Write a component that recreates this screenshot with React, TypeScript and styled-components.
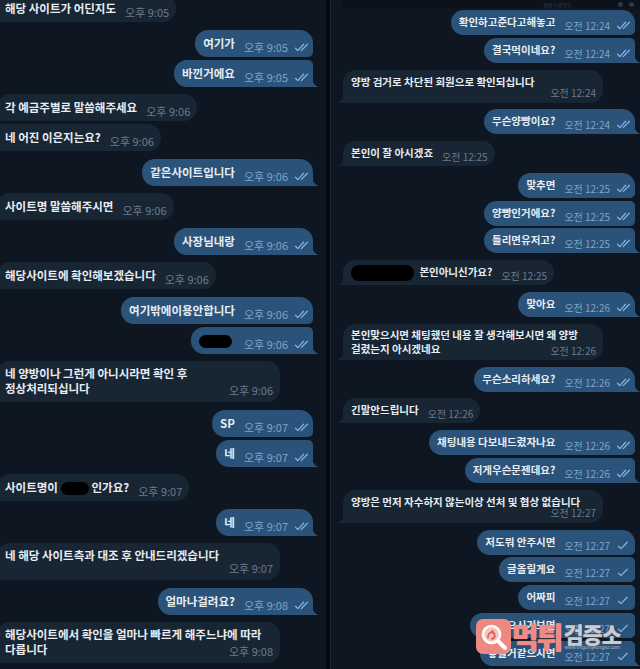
import React from 'react';
import styled, { createGlobalStyle, css } from 'styled-components';

const colors = {
  bg: '#0e1621',
  divider: '#05080c',
  inBubble: '#182533',
  outBubble: '#2b5278',
  text: '#e7edf2',
  inTime: '#6b7b8b',
  outTime: '#7fa5c8',
  check: '#79b5ea',
};

type Side = 'in' | 'out';
type Size = 'lg' | 'sm';
type MetaMode = 'inline' | 'float' | 'block';

type Msg = {
  side: Side;
  text: React.ReactNode;
  time: string;
  check?: 1 | 2;
  meta?: MetaMode;
  wide?: boolean;
};

const sizes = {
  lg: {
    font: 11.5, line: 15, time: 11, wide: 283, sameGap: 3, groupGap: 7.5, listTop: -5,
    inlinePad: [6, 6], floatPad: '5px 7px 6px 8px', floatTop: 4, blockPad: '5px 7px 6px 8px', blockTop: 0,
  },
  sm: {
    font: 10.5, line: 14, time: 10, wide: 260, sameGap: 2.75, groupGap: 6.8, listTop: 2,
    inlinePad: [5, 6], floatPad: '4px 7px 4px 8px', floatTop: 3, blockPad: '5px 7px 5px 8px', blockTop: -2,
  },
};

const GlobalStyle = createGlobalStyle`
  html, body {
    margin: 0;
    padding: 0;
    background: ${colors.bg};
  }
  body {
    font-family: "Noto Sans CJK KR", "Noto Sans", sans-serif;
  }
`;

const Screen = styled.div`
  position: relative;
  width: 640px;
  height: 669px;
  overflow: hidden;
  display: grid;
  grid-template-columns: 326px 4px 1fr;
  background: ${colors.bg};
`;

const Divider = styled.div`
  background: ${colors.divider};
`;

const Panel = styled.section<{ $size: Size }>`
  display: flex;
  flex-direction: column;
  min-width: 0;
  overflow: hidden;
  background: ${colors.bg};
  ${p => p.$size === 'lg'
    ? css`padding: 0 13px 0 0;`
    : css`
      border-left: 1px solid #1a2330;
      padding: 0 5px 0 12px;
    `}
`;

const PanelHeader = styled.div`
  height: 8px;
  display: flex;
  align-items: center;
  justify-content: flex-end;
  gap: 6px;
  padding-right: 6px;
  margin-right: -5px;
  background: #0b121b;
  font-size: 5px;
  color: #3b4856;
  span { margin-right: 40px; }
  i {
    width: 5px;
    height: 5px;
    border-radius: 50%;
    background: #2c3845;
  }
`;

const List = styled.div<{ $size: Size }>`
  display: flex;
  flex-direction: column;
  margin-top: ${p => sizes[p.$size].listTop}px;
`;

const Row = styled.div<{ $side: Side; $gap: number; $size: Size }>`
  display: flex;
  justify-content: ${p => (p.$side === 'out' ? 'flex-end' : 'flex-start')};
  margin-top: ${p => p.$gap}px;
  ${p => p.$size === 'lg' && p.$side === 'in' && css`margin-left: -3px;`}
`;

const BIG = 13;
const SMALL = 5;

const Bubble = styled.div<{ $side: Side; $first: boolean; $last: boolean; $size: Size; $mode: MetaMode; $wide?: boolean }>`
  position: relative;
  box-sizing: border-box;
  white-space: nowrap;
  color: ${colors.text};
  font-size: ${p => sizes[p.$size].font}px;
  font-weight: 700;
  line-height: ${p => sizes[p.$size].line}px;
  background: ${p => (p.$side === 'out' ? colors.outBubble : colors.inBubble)};
  ${p => p.$mode === 'inline' && css`
    display: flex;
    align-items: flex-end;
    padding: ${sizes[p.$size].inlinePad[0]}px ${p.$side === 'out' ? 4 : 7}px ${sizes[p.$size].inlinePad[1]}px 8px;
  `}
  ${p => p.$mode === 'float' && css`padding: ${sizes[p.$size].floatPad};`}
  ${p => p.$mode === 'block' && css`padding: ${sizes[p.$size].blockPad};`}
  ${p => p.$wide && css`width: ${sizes[p.$size].wide}px;`}
  ${p => p.$side === 'out'
    ? css`border-radius: ${BIG}px ${p.$first ? BIG : SMALL}px ${p.$last ? 0 : SMALL}px ${BIG}px;`
    : css`border-radius: ${p.$first ? BIG : SMALL}px ${BIG}px ${BIG}px ${p.$last ? 0 : SMALL}px;`}

  ${p => p.$last && css`
    &::after {
      content: '';
      position: absolute;
      bottom: 0;
      width: 7px;
      height: 10px;
      ${p.$side === 'out'
        ? css`
          right: -6px;
          background: radial-gradient(ellipse 7px 10px at 100% 0, transparent 95%, ${colors.outBubble} 100%);
        `
        : css`
          left: -6px;
          background: radial-gradient(ellipse 7px 10px at 0 0, transparent 95%, ${colors.inBubble} 100%);
        `}
    }
  `}
`;

const Text = styled.span`
  display: inline-block;
`;

const Meta = styled.span<{ $side: Side; $mode: MetaMode; $size: Size }>`
  font-size: ${p => sizes[p.$size].time}px;
  font-weight: 400;
  line-height: 11px;
  height: 11px;
  color: ${p => (p.$side === 'out' ? colors.outTime : colors.inTime)};
  display: flex;
  align-items: center;
  gap: 6px;
  svg { color: ${colors.check}; }
  ${p => p.$mode === 'inline' && css`
    margin: 0 0 -2px 9px;
  `}
  ${p => p.$mode === 'float' && css`
    float: right;
    margin: ${sizes[p.$size].floatTop}px 0 0 10px;
  `}
  ${p => p.$mode === 'block' && css`
    justify-content: flex-end;
    margin-top: ${sizes[p.$size].blockTop}px;
  `}
`;

const Redact = styled.span<{ $w: number; $h?: number }>`
  display: inline-block;
  width: ${p => p.$w}px;
  height: ${p => p.$h ?? 13}px;
  border-radius: 8px;
  background: #000;
  vertical-align: middle;
  margin: -3px 3px -3px 0;
`;

const Checks = ({ count }: { count: 1 | 2 }) => (
  <svg width="15" height="9" viewBox="0 0 15 9" fill="none" stroke="currentColor" strokeWidth="1.3" strokeLinecap="round" strokeLinejoin="round">
    {count === 2 ? (
      <>
        <path d="M1.5 5.2 L3.8 7.6 L9.6 1.2" />
        <path d="M7.2 7.6 L13.4 1.2" />
      </>
    ) : (
      <path d="M2.5 5.2 L5 7.6 L11.2 1.2" />
    )}
  </svg>
);

const lines = (...parts: string[]) =>
  parts.map((t, i) => (
    <React.Fragment key={i}>
      {i > 0 && <br />}
      {t}
    </React.Fragment>
  ));

const leftMessages: Msg[] = [
  { side: 'in', text: '해당 사이트가 어딘지도', time: '오후 9:05' },
  { side: 'out', text: '여기가', time: '오후 9:05', check: 2 },
  { side: 'out', text: '바낀거에요', time: '오후 9:05', check: 2 },
  { side: 'in', text: '각 예금주별로 말씀해주세요', time: '오후 9:06' },
  { side: 'in', text: '네 어진 이은지는요?', time: '오후 9:06' },
  { side: 'out', text: '같은사이트입니다', time: '오후 9:06', check: 2 },
  { side: 'in', text: '사이트명 말씀해주시면', time: '오후 9:06' },
  { side: 'out', text: '사장님내랑', time: '오후 9:06', check: 2 },
  { side: 'in', text: '해당사이트에 확인해보겠습니다', time: '오후 9:06' },
  { side: 'out', text: '여기밖에이용안합니다', time: '오후 9:06', check: 2 },
  { side: 'out', text: <Redact $w={33} />, time: '오후 9:06', check: 2 },
  { side: 'in', text: lines('네 양방이나 그런게 아니시라면 확인 후', '정상처리되십니다'), time: '오후 9:06', meta: 'float', wide: true },
  { side: 'out', text: 'SP', time: '오후 9:07', check: 2 },
  { side: 'out', text: '네', time: '오후 9:07', check: 2 },
  { side: 'in', text: <>사이트명이 <Redact $w={28} />인가요?</>, time: '오후 9:07' },
  { side: 'out', text: '네', time: '오후 9:07', check: 2 },
  { side: 'in', text: '네 해당 사이트측과 대조 후 안내드리겠습니다', time: '오후 9:07', meta: 'block', wide: true },
  { side: 'out', text: '얼마나걸려요?', time: '오후 9:08', check: 2 },
  { side: 'in', text: lines('해당사이트에서 확인을 얼마나 빠르게 해주느냐에 따라', '다릅니다'), time: '오후 9:08', meta: 'float', wide: true },
];

const rightMessages: Msg[] = [
  { side: 'out', text: '확인하고준다고해놓고', time: '오전 12:24', check: 2 },
  { side: 'out', text: '결국먹이네요?', time: '오전 12:24', check: 2 },
  { side: 'in', text: '양방 검거로 차단된 회원으로 확인되십니다', time: '오전 12:24', meta: 'block', wide: true },
  { side: 'out', text: '무슨양빵이요?', time: '오전 12:24', check: 2 },
  { side: 'in', text: '본인이 잘 아시겠죠', time: '오전 12:25' },
  { side: 'out', text: '맞추면', time: '오전 12:25', check: 2 },
  { side: 'out', text: '양빵인거에요?', time: '오전 12:25', check: 2 },
  { side: 'out', text: '틀리면유저고?', time: '오전 12:25', check: 2 },
  { side: 'in', text: <><Redact $w={63} $h={16} /> 본인아니신가요?</>, time: '오전 12:25' },
  { side: 'out', text: '맞아요', time: '오전 12:26', check: 2 },
  { side: 'in', text: lines('본인맞으시면 채팅했던 내용 잘 생각해보시면 왜 양방', '걸렸는지 아시겠네요'), time: '오전 12:26', meta: 'float', wide: true },
  { side: 'out', text: '무슨소리하세요?', time: '오전 12:26', check: 2 },
  { side: 'in', text: '긴말안드립니다', time: '오전 12:26' },
  { side: 'out', text: '채팅내용 다보내드렸자나요', time: '오전 12:26', check: 2 },
  { side: 'out', text: '저게우슨문젠데요?', time: '오전 12:26', check: 2 },
  { side: 'in', text: '양방은 먼저 자수하지 않는이상 선처 및 협상 없습니다', time: '오전 12:27', meta: 'block', wide: true },
  { side: 'out', text: '저도뭐 안주시면', time: '오전 12:27', check: 1 },
  { side: 'out', text: '글올릴게요', time: '오전 12:27', check: 1 },
  { side: 'out', text: '어짜피', time: '오전 12:27', check: 1 },
  { side: 'out', text: '차단받으시거보면', time: '오전 12:27', check: 1 },
  { side: 'out', text: '좋을거같으시면', time: '오전 12:27', check: 1 },
];

const Chat = ({ messages, size }: { messages: Msg[]; size: Size }) => (
  <List $size={size}>
    {messages.map((m, i) => {
      const prev = messages[i - 1];
      const next = messages[i + 1];
      const first = !prev || prev.side !== m.side;
      const last = !next || next.side !== m.side;
      const gap = i === 0 ? 0 : first ? sizes[size].groupGap : sizes[size].sameGap;
      const mode = m.meta ?? 'inline';
      return (
        <Row key={i} $side={m.side} $gap={gap} $size={size}>
          <Bubble $side={m.side} $first={first} $last={last} $size={size} $mode={mode} $wide={m.wide}>
            {mode === 'inline' ? <Text>{m.text}</Text> : m.text}
            <Meta $side={m.side} $mode={mode} $size={size}>
              {m.time}
              {m.check && <Checks count={m.check} />}
            </Meta>
          </Bubble>
        </Row>
      );
    })}
  </List>
);

const Watermark = styled.div`
  position: absolute;
  left: 476px;
  top: 619px;
  display: flex;
  align-items: center;
  gap: 1px;
  pointer-events: none;
`;

const Badge = styled.div`
  width: 35px;
  height: 35px;
  border-radius: 7px;
  background: #ee8981;
  display: grid;
  place-items: center;
`;

const BrandMain = styled.span`
  font-size: 29px;
  font-weight: 900;
  line-height: 1;
  letter-spacing: -2px;
  color: #f08b83;
  text-shadow: 0 0 1px #f7b6b0;
`;

const BrandSide = styled.div`
  display: flex;
  flex-direction: column;
  align-items: center;
  margin-left: 1px;
`;

const BrandSub = styled.span`
  font-size: 22px;
  font-weight: 900;
  line-height: 1;
  letter-spacing: -1px;
  color: #c9cdd2;
  text-shadow: 0 0 2px #3b4350;
`;

const BrandUrl = styled.span`
  font-family: "Liberation Sans", sans-serif;
  font-size: 5px;
  line-height: 7px;
  color: #b8bcc2;
`;

const MagnifierIcon = () => (
  <svg width="30" height="30" viewBox="0 0 30 30">
    <circle cx="12.5" cy="12.5" r="8.5" fill="#f7c3bd" stroke="#fff" strokeWidth="2.6" />
    <path d="M9 15.5c0-3 1.6-5.2 3.6-5.2s3.2 1.6 3.2 3.4-1.4 3-3.2 3" fill="none" stroke="#e0645b" strokeWidth="1.8" strokeLinecap="round" />
    <circle cx="13.3" cy="9.8" r="1.6" fill="#e0645b" />
    <path d="M19 19 L26 26" stroke="#fff" strokeWidth="4" strokeLinecap="round" />
  </svg>
);

export default function App() {
  return (
    <>
      <GlobalStyle />
      <Screen>
        <Panel $size="lg">
          <Chat messages={leftMessages} size="lg" />
        </Panel>
        <Divider />
        <Panel $size="sm">
          <PanelHeader>
            <span>확인 다운로드</span>
            <i />
            <i />
          </PanelHeader>
          <Chat messages={rightMessages} size="sm" />
        </Panel>
        <Watermark>
          <Badge>
            <MagnifierIcon />
          </Badge>
          <BrandMain>먹튀</BrandMain>
          <BrandSide>
            <BrandSub>검증소</BrandSub>
            <BrandUrl>www.mtgumjeungso.com</BrandUrl>
          </BrandSide>
        </Watermark>
      </Screen>
    </>
  );
}
